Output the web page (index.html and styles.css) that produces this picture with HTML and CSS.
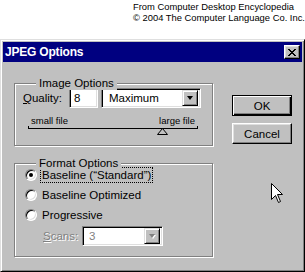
FILE: index.html
```html
<!DOCTYPE html>
<html>
<head>
<meta charset="utf-8">
<link rel="stylesheet" href="styles.css">
</head>
<body>
<div class="header">
  <div>From Computer Desktop Encyclopedia</div>
  <div>© 2004 The Computer Language Co. Inc.</div>
</div>
<div class="window">
  <div class="titlebar">
    <span class="title">JPEG Options</span>
    <span class="close"><svg width="8" height="7" viewBox="0 0 8 7"><path d="M0 0h2v1h1v1h2v-1h1v-1h2v1h-1v1h-1v1h-1v1h1v1h1v1h1v1h-2v-1h-1v-1h-2v1h-1v1h-2v-1h1v-1h1v-1h1v-1h-1v-1h-1v-1h-1z" fill="#000"/></svg></span>
  </div>
  <div class="client">
    <div class="leftcol">
      <div class="group g1">
        <span class="legend">Image Options</span>
        <div class="qrow">
          <span class="qlabel"><u>Q</u>uality:</span>
          <span class="field qinput">8</span>
          <span class="field combo qcombo"><span class="ctext">Maximum</span><span class="arrowbtn"><span class="tri"></span></span></span>
        </div>
        <div class="slider">
          <div class="slabels"><span>small file</span><span>large file</span></div>
          <div class="track">
            <svg class="thumb" width="11" height="7" viewBox="0 0 11 7"><path d="M5.5 0.5 L10.5 6.5 L0.5 6.5 Z" fill="#c0c0c0" stroke="#000" stroke-width="1"/></svg>
          </div>
        </div>
      </div>
      <div class="group g2">
        <span class="legend">Format Options</span>
        <div class="rrow"><span class="radio checked"></span><span class="rlabel focus">Baseline (“Standard”)</span></div>
        <div class="rrow"><span class="radio"></span><span class="rlabel">Baseline Optimized</span></div>
        <div class="rrow"><span class="radio"></span><span class="rlabel">Progressive</span></div>
        <div class="srow">
          <span class="slabel"><u>S</u>cans:</span>
          <span class="field combo scombo"><span class="ctext dis">3</span><span class="arrowbtn"><span class="tri dtri"></span></span></span>
        </div>
      </div>
    </div>
    <div class="rightcol">
      <div class="btn default">OK</div>
      <div class="btn">Cancel</div>
    </div>
  </div>
  <svg class="cursor" width="12" height="20" viewBox="0 0 12 20"><path d="M0.5 0.5 L0.5 16.5 L4.5 12.5 L7.5 19.5 L9.5 18.5 L6.5 11.5 L11.5 11.5 Z" fill="#fff" stroke="#000" stroke-width="1"/></svg>
</div>
</body>
</html>
```
FILE: styles.css
```css
html, body {
  margin: 0;
  padding: 0;
  background: #fff;
}
body {
  width: 305px;
  height: 272px;
  overflow: hidden;
  font-family: "Liberation Sans", Arial, sans-serif;
}
.header {
  height: 39px;
  box-sizing: border-box;
  padding: 1px 0 0 133px;
  font-size: 9.4px;
  line-height: 11px;
  color: #000;
}
.window {
  position: relative;
  width: 305px;
  height: 233px;
  box-sizing: border-box;
  background: #c0c0c0;
  border: 1px solid;
  border-color: #dfdfdf #000 #000 #dfdfdf;
  box-shadow: inset 1px 1px #fff, inset -1px -1px #808080;
  padding: 2px;
}
.titlebar {
  height: 20px;
  background: #000080;
  display: flex;
  align-items: center;
  justify-content: space-between;
  padding: 0 2px 0 2px;
  color: #fff;
}
.title {
  font-weight: bold;
  font-size: 12px;
  letter-spacing: -0.2px;
}
.close {
  width: 16px;
  height: 14px;
  box-sizing: border-box;
  background: #c0c0c0;
  border: 1px solid;
  border-color: #fff #000 #000 #fff;
  box-shadow: inset -1px -1px #808080, inset 1px 1px #dfdfdf;
  display: flex;
  align-items: center;
  justify-content: center;
}
.close svg { display: block; }
.client {
  display: flex;
  padding: 21px 0 0 11px;
  font-size: 11.5px;
  color: #000;
}
.leftcol {
  width: 200px;
}
.group {
  position: relative;
  width: 199px;
  box-sizing: border-box;
  border: 1px solid #808080;
  box-shadow: 1px 1px 0 #fff, inset 1px 1px 0 #fff;
}
.g1 { height: 63px; }
.g2 { height: 94px; margin-top: 17px; }
.legend {
  position: absolute;
  top: -8px;
  left: 21px;
  padding: 0 3px;
  background: #c0c0c0;
  line-height: 14px;
}
.qrow {
  display: flex;
  align-items: center;
  margin: 4px 0 0 8px;
  height: 20px;
}
.qlabel {
  width: 46px;
}
.field {
  box-sizing: border-box;
  height: 20px;
  background: #fff;
  border: 1px solid;
  border-color: #808080 #fff #fff #808080;
  box-shadow: inset 1px 1px #000, inset -1px -1px #dfdfdf;
  display: flex;
  align-items: center;
}
.qinput {
  width: 29px;
  padding-left: 4px;
}
.qcombo {
  width: 100px;
  margin-left: 3px;
}
.combo {
  justify-content: space-between;
  padding: 2px;
}
.ctext {
  padding-left: 5px;
}
.ctext.dis {
  color: #808080;
  padding-left: 4px;
}
.arrowbtn {
  width: 16px;
  height: 16px;
  box-sizing: border-box;
  background: #c0c0c0;
  border: 1px solid;
  border-color: #dfdfdf #000 #000 #dfdfdf;
  box-shadow: inset 1px 1px #fff, inset -1px -1px #808080;
  display: flex;
  align-items: center;
  justify-content: center;
}
.tri {
  width: 0;
  height: 0;
  border-left: 3.5px solid transparent;
  border-right: 3.5px solid transparent;
  border-top: 4px solid #000;
}
.tri.dtri {
  border-top-color: #808080;
  filter: drop-shadow(1px 1px 0 #fff);
}
.slider {
  margin: 7px 0 0 13px;
  width: 170px;
}
.slabels {
  display: flex;
  justify-content: space-between;
  padding: 0 3px 0 3px;
  font-size: 9.5px;
  line-height: 11px;
}
.track {
  position: relative;
  height: 3px;
  margin-top: 0;
  box-sizing: border-box;
  border: 1px solid #000;
  border-top: none;
}
.thumb {
  position: absolute;
  left: 128px;
  top: 2px;
}
.rrow {
  display: flex;
  align-items: center;
  height: 20px;
  margin-left: 10px;
}
.rrow:first-of-type { margin-top: 1px; }
.radio {
  position: relative;
  width: 12px;
  height: 12px;
  box-sizing: border-box;
  border-radius: 50%;
  background: #fff;
  border: 1px solid;
  border-color: #808080 #fff #fff #808080;
  box-shadow: inset 1px 1px #000, inset -1px -1px #dfdfdf;
}
.radio.checked::after {
  content: "";
  position: absolute;
  left: 3px;
  top: 3px;
  width: 4px;
  height: 4px;
  border-radius: 50%;
  background: #000;
}
.rlabel {
  margin-left: 3px;
  padding: 0 1px;
  line-height: 14px;
  border: 1px solid transparent;
}
.rlabel.focus {
  border: 1px dotted #000;
}
.srow {
  display: flex;
  align-items: center;
  margin: 1px 0 0 28px;
}
.slabel {
  width: 39px;
  color: #808080;
  text-shadow: 1px 1px 0 #fff;
}
.scombo {
  width: 81px;
  height: 20px;
}
.rightcol {
  margin-left: 18px;
  padding-top: 12px;
  display: flex;
  flex-direction: column;
  gap: 7px;
}
.btn {
  width: 60px;
  height: 21px;
  box-sizing: border-box;
  background: #c0c0c0;
  border: 1px solid;
  border-color: #fff #000 #000 #fff;
  box-shadow: inset -1px -1px #808080, inset 1px 1px #dfdfdf;
  display: flex;
  align-items: center;
  justify-content: center;
}
.btn.default {
  border: 1px solid #000;
  box-shadow: inset 1px 1px #fff, inset -1px -1px #000, inset -2px -2px #808080;
}
.cursor {
  position: absolute;
  left: 270px;
  top: 143px;
}
```
